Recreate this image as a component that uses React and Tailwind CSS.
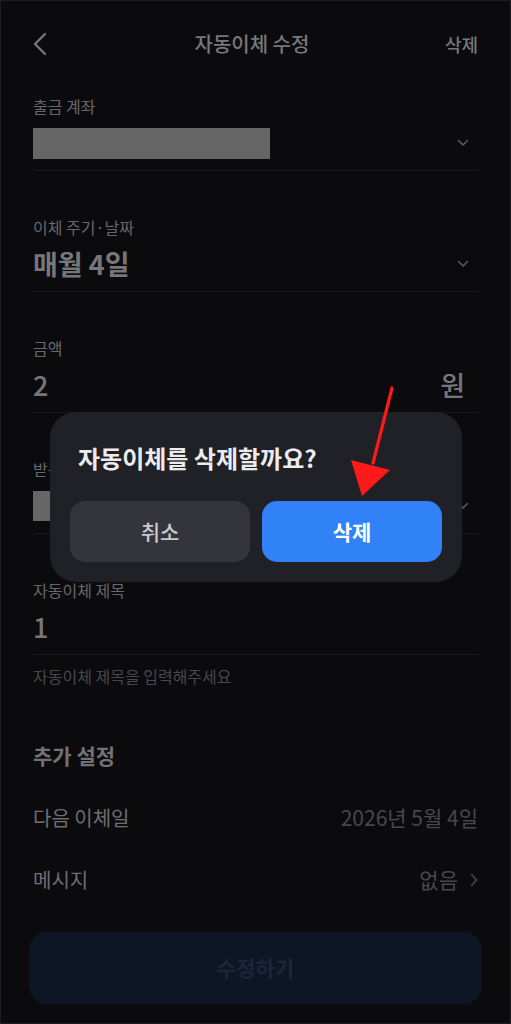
const font = { fontFamily: '"Noto Sans CJK KR", "Noto Sans", sans-serif' };

function ChevronDown() {
  return (
    <svg width="12" height="8" viewBox="0 0 12 8" fill="none" className="mr-[9px]">
      <path d="M1.5 1.5 6 6l4.5-4.5" stroke="#5a5a5e" strokeWidth="1.6" strokeLinecap="round" strokeLinejoin="round" />
    </svg>
  );
}

function Field({ label, children, chevron }) {
  return (
    <div className="mt-[46px] first:mt-[9px]">
      <p className="text-[16px] leading-5 text-[#67676b]">{label}</p>
      <div className="flex h-[55px] items-center justify-between border-b border-[#1b1b1f]">
        {children}
        {chevron && <ChevronDown />}
      </div>
    </div>
  );
}

function SettingRow({ label, value, arrow }) {
  return (
    <div className="flex h-[62px] items-center justify-between">
      <span className="text-[20px] text-[#6e6e72]">{label}</span>
      <span className="flex items-center gap-3 text-[21px] text-[#48484c]">
        {value}
        {arrow && (
          <svg width="8" height="14" viewBox="0 0 8 14" fill="none">
            <path d="M1.5 1.5 6.5 7l-5 5.5" stroke="#48484c" strokeWidth="1.6" strokeLinecap="round" strokeLinejoin="round" />
          </svg>
        )}
      </span>
    </div>
  );
}

export default function App() {
  return (
    <div className="relative h-[1024px] w-[511px] overflow-hidden border border-[#1e1e22] bg-[#0b0b0e]" style={font}>
      {/* header */}
      <div className="flex h-[86px] items-center justify-between px-8">
        <svg width="14" height="24" viewBox="0 0 14 24" fill="none">
          <path d="M12 2 2 12l10 10" stroke="#767679" strokeWidth="2.4" strokeLinecap="round" strokeLinejoin="round" />
        </svg>
        <h1 className="ml-[12px] text-[20px] font-medium text-[#78787b]">자동이체 수정</h1>
        <span className="text-[18px] font-medium text-[#78787b]">삭제</span>
      </div>

      <div className="px-8">
        <Field label="출금 계좌" chevron>
          <div className="h-[31px] w-[237px] bg-[#666666]" />
        </Field>
        <Field label="이체 주기·날짜" chevron>
          <span className="text-[27px] font-bold text-[#777779]">매월 4일</span>
        </Field>
        <Field label="금액">
          <span className="text-[27px] font-medium text-[#777779]">2</span>
          <span className="mr-[13px] text-[27px] font-medium text-[#777779]">원</span>
        </Field>
        <Field label="받는 계좌" chevron>
          <div className="h-[30px] w-[237px] bg-[#666666]" />
        </Field>
        <Field label="자동이체 제목">
          <span className="text-[27px] font-medium text-[#777779]">1</span>
        </Field>
        <p className="mt-[11px] text-[16px] leading-5 text-[#48484c]">자동이체 제목을 입력해주세요</p>

        <h2 className="mt-[55px] text-[21px] font-bold leading-7 text-[#727275]">추가 설정</h2>
        <div className="mt-[18px]">
          <SettingRow label="다음 이체일" value="2026년 5월 4일" />
          <SettingRow label="메시지" value="없음" arrow />
        </div>
      </div>

      <div className="mt-[21px] px-[28px]">
        <button className="flex h-[72px] w-full items-center justify-center rounded-[18px] bg-[#0e1626] text-[21px] font-bold text-[#1c2638]">
          수정하기
        </button>
      </div>

      {/* confirm dialog */}
      <div className="absolute left-[49px] top-[411px] w-[412px] rounded-[26px] bg-[#202127] px-5 pb-5 pt-[30px]">
        <p className="pl-2 text-[24px] font-bold leading-8 text-[#ececee]">자동이체를 삭제할까요?</p>
        <div className="mt-[27px] flex gap-3">
          <button className="h-[61px] flex-1 rounded-[15px] bg-[#33343c] text-[21px] font-medium text-[#c9c9cf]">취소</button>
          <button className="h-[61px] flex-1 rounded-[15px] bg-[#3182f6] text-[21px] font-bold text-white">삭제</button>
        </div>
      </div>

      {/* pointer arrow */}
      <svg className="absolute left-0 top-0" width="511" height="1024" viewBox="0 0 511 1024" fill="none">
        <path d="M391 387 372 462" stroke="#ff1a1a" strokeWidth="3.2" strokeLinecap="round" />
        <path d="M350 459 389 469 361 495Z" fill="#ff1a1a" />
      </svg>
    </div>
  );
}
